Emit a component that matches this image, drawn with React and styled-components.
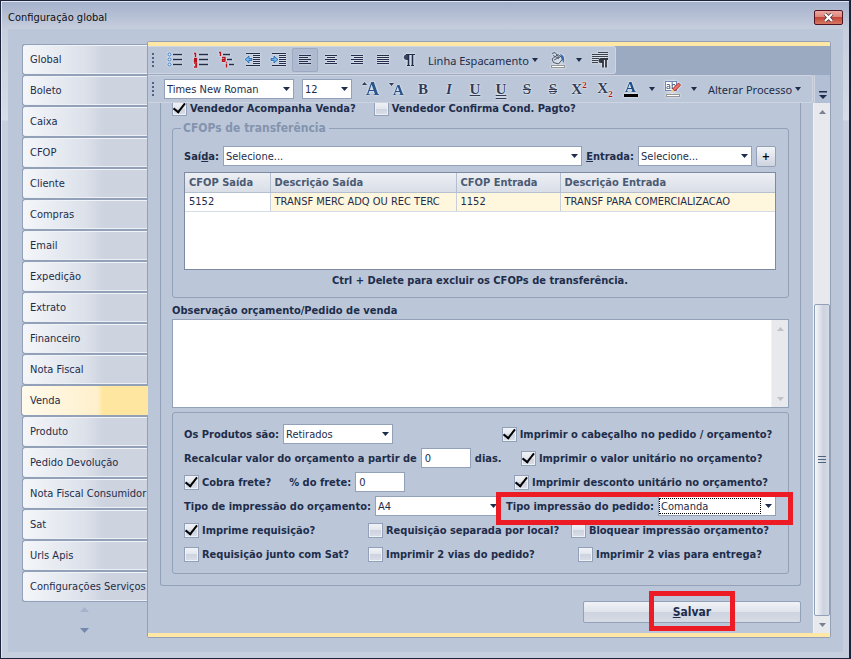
// Import Packages
import React, { useState } from 'react';
import styled, { createGlobalStyle, css } from 'styled-components';

const ui = `'DejaVu Sans Condensed', 'Noto Sans', sans-serif`;
const ribbon = `'Noto Sans', 'Open Sans', sans-serif`;
const serif = `'Liberation Serif', serif`;
const panel = 'rgb(187, 199, 216)';
const line = 'rgb(146, 160, 184)';
const ink = 'rgb(30, 45, 75)';
const yellow = 'rgb(255, 232, 166)';
const red = 'rgb(237, 28, 36)';
const barDark = 'rgb(155, 169, 193)';
const light = 'rgb(206, 213, 225)';

const GlobalStyle = createGlobalStyle`
  * { box-sizing: border-box; }
  body { margin: 0; }
  body, button, input, select, textarea {
    font-family: ${ui};
    font-size: 11px;
    color: ${ink};
  }
  button { cursor: pointer; }
`;

const Window = styled.main`
  display: flex;
  flex-direction: column;
  min-height: 100vh;
  padding: 1px 6px 6px 7px;
  border: 1px solid rgb(30, 35, 60);
  border-right-width: 2px;
  background: linear-gradient(rgb(163, 176, 203), rgb(198, 206, 221) 28px, rgb(214, 220, 232) 119px, rgb(199, 206, 221) 120px);
  box-shadow: inset 1px 1px 0 rgb(225, 230, 240);
`;
const TitleBar = styled.header`
  display: flex;
  align-items: center;
  justify-content: space-between;
  height: 27px;
  padding-top: 4px;
`;
const Title = styled.h1`
  margin: 0;
  font-size: 11px;
  font-weight: normal;
  color: rgb(15, 15, 20);
`;
const CloseButton = styled.button`
  display: flex;
  align-items: center;
  justify-content: center;
  width: 29px;
  height: 15px;
  padding: 0;
  border: 1px solid rgb(80, 20, 35);
  border-radius: 2px;
  background: linear-gradient(rgb(236, 170, 160), rgb(222, 130, 118) 50%, rgb(196, 70, 55) 50%, rgb(214, 120, 100));
`;
const Body = styled.div`
  flex: 1;
  display: flex;
  padding: 12px 12px 14px 14px;
  background: ${panel};
`;
const Tabs = styled.nav`
  width: 125px;
  flex-shrink: 0;
  padding-top: 3px;
  display: flex;
  flex-direction: column;
`;
const Tab = styled.button`
  height: 31px;
  padding: 0 0 0 7px;
  text-align: left;
  white-space: nowrap;
  border: 1px solid ${line};
  border-right: none;
  border-radius: 3px 0 0 3px;
  background: linear-gradient(90deg, rgb(244, 246, 249), rgb(220, 225, 234) 50%, rgb(205, 211, 223) 66%);
  box-shadow: inset 0 1px 0 rgb(240, 243, 248), inset 0 -1px 0 rgb(236, 239, 245);
  ${props => props.$active && css`
    margin: 0 -1px;
    padding-left: 8px;
    z-index: 1;
    background: linear-gradient(90deg, rgb(255, 250, 236), rgb(255, 240, 204) 60%, rgb(255, 230, 160) 64%);
    box-shadow: none;
  `}
`;
const TabScroll = styled.div`
  display: flex;
  flex-direction: column;
  align-items: center;
  gap: 16px;
  padding-top: 5px;
`;
const TabArrow = styled.button`
  display: flex;
  padding: 0;
  border: none;
  background: none;
`;
const Panel = styled.section`
  flex: 1;
  min-width: 0;
  display: flex;
  flex-direction: column;
  border: 1px solid ${line};
  border-radius: 2px;
  &::before, &::after {
    content: '';
    height: 4px;
    background: ${yellow};
  }
`;
const ToolRow = styled.div`
  display: flex;
  background: ${props => props.$dark ? barDark : panel};
  & + & { border-top: 1px solid ${barDark}; }
`;
const ToolBar = styled.div`
  display: flex;
  align-items: center;
  height: 28px;
  padding: 0 2px 0 4px;
  background: ${panel};
  border: 1px solid ${light};
  border-left: none;
  border-radius: 0 3px 3px 0;
  ${props => props.$grow && 'flex: 1;'}
`;
const Tools = styled.div`
  display: flex;
  align-items: center;
  padding-left: 6px;
`;
const FontFields = styled.div`
  display: flex;
  align-items: center;
  gap: 8px;
  padding: 0 6px 0 8px;
`;
const Tool = styled.button`
  display: flex;
  align-items: center;
  justify-content: center;
  width: 26px;
  height: 24px;
  padding: 0;
  border: 1px solid ${props => props.$active ? barDark : 'transparent'};
  border-radius: 2px;
  background: ${props => props.$active ? 'rgb(174, 186, 207)' : 'none'};
  flex-shrink: 0;
  svg { filter: drop-shadow(0 0 1px rgba(255, 255, 255, 0.9)); }
`;
const Letter = styled.span`
  font: bold 15px/18px ${serif};
  color: rgb(48, 60, 88);
  text-shadow: 0 0 2px white, 0 0 1px white;
  font-style: ${props => props.$italic ? 'italic' : 'normal'};
  text-decoration: ${props => props.$deco || 'none'};
  sup, sub {
    font-size: 9px;
    line-height: 1;
    color: rgb(178, 20, 30);
  }
`;
const TextTool = styled.button`
  display: flex;
  align-items: center;
  gap: 3px;
  padding: 0 7px 0 6px;
  border: none;
  background: none;
  font-family: ${ribbon};
  white-space: nowrap;
`;
const DropTool = styled.button`
  display: flex;
  justify-content: center;
  width: 16px;
  padding: 0;
  border: none;
  background: none;
`;
const Overflow = styled.button`
  display: flex;
  align-items: flex-end;
  justify-content: center;
  width: 16px;
  margin-left: 1px;
  padding: 0 0 4px;
  border: none;
  border-left: 1px solid ${light};
  background: rgb(178, 191, 212);
`;
const ScrollArea = styled.div`
  flex: 1;
  display: flex;
  min-height: 0;
`;
const Content = styled.form`
  flex: 1;
  min-width: 0;
  overflow: hidden;
  padding: 0 12px;
`;
const Outer = styled.div`
  margin-top: -4px;
  padding: 0 11px 7px;
  border: 1px solid ${line};
  border-top: none;
  border-radius: 0 0 3px 3px;
`;
const FieldRow = styled.div`
  display: flex;
  align-items: center;
  gap: 4px;
  height: 24px;
`;
const TopRow = styled(FieldRow)`
  gap: 18px;
  height: 18px;
  margin-bottom: 3px;
`;
const Label = styled.label`
  font-weight: bold;
  white-space: nowrap;
`;
const FreightLabel = styled(Label)`
  margin-left: 14px;
`;
const CheckLabel = styled(Label)`
  display: flex;
  align-items: center;
  gap: 3px;
`;
const CheckInput = styled.input`
  appearance: none;
  display: grid;
  place-items: center;
  width: 15px;
  height: 15px;
  margin: 0;
  border: 1px solid ${line};
  background: linear-gradient(rgb(240, 242, 246), rgb(226, 230, 237) 50%, rgb(205, 211, 223) 50%, rgb(218, 223, 232));
  box-shadow: inset 0 0 0 1px rgb(238, 241, 246);
  &:checked::before {
    content: '';
    width: 5px;
    height: 10px;
    border: solid black;
    border-width: 0 2px 2px 0;
    transform: rotate(38deg) translate(-1px, -1px);
  }
`;
const SelectBox = styled.span`
  display: flex;
  align-items: center;
  height: 20px;
  min-width: 0;
  padding: 1px 3px 1px 0;
  border: 1px solid ${line};
  background: white;
  ${props => props.$width ? `width: ${props.$width}px;` : 'flex: 1;'}
  svg { flex-shrink: 0; }
`;
const SelectInput = styled.select`
  appearance: none;
  flex: 1;
  min-width: 0;
  height: 16px;
  margin-right: 4px;
  padding: 0 1px;
  border: ${props => props.$focus ? '1px dotted black' : '1px solid transparent'};
  background: none;
`;
const NumberInput = styled.input`
  width: 50px;
  height: 20px;
  padding: 0 3px;
  border: 1px solid ${line};
  background: white;
`;
const Group = styled.fieldset`
  min-width: 0;
  margin: 0 0 4px;
  padding: ${props => props.$padding};
  border: 1px solid ${line};
  border-radius: 3px;
`;
const Legend = styled.legend`
  padding: 0 3px 0 2px;
  margin-left: -3px;
  font-size: 12px;
  line-height: 16px;
  font-weight: bold;
  color: rgb(132, 147, 174);
`;
const AddButton = styled.button`
  width: 20px;
  height: 21px;
  padding: 0;
  font-weight: bold;
  color: black;
  border: 1px solid ${line};
  border-radius: 2px;
  background: linear-gradient(rgb(243, 245, 248), rgb(205, 211, 223));
`;
const Grid = styled.div`
  height: 98px;
  margin-top: 4px;
  border: 1px solid rgb(125, 138, 162);
  background: white;
`;
const Table = styled.table`
  width: 100%;
  table-layout: fixed;
  border-collapse: collapse;
  th, td {
    height: 19px;
    padding: 0 4px;
    text-align: left;
    white-space: nowrap;
    border-right: 1px solid rgb(200, 207, 219);
    border-bottom: 1px solid rgb(214, 220, 230);
  }
  th {
    color: rgb(75, 90, 115);
    background: linear-gradient(rgb(236, 239, 243), rgb(217, 222, 231));
    border-color: rgb(180, 191, 208);
  }
  td { background: rgb(255, 246, 222); }
  td:first-child { background: white; }
  th:last-child, td:last-child { border-right: none; }
`;
const Hint = styled.p`
  margin: 3px 0 0;
  line-height: 16px;
  text-align: center;
  font-weight: bold;
`;
const NoteLabel = styled(Label)`
  display: block;
  line-height: 17px;
`;
const NoteBox = styled.div`
  display: flex;
  height: 89px;
  margin-bottom: 4px;
  border: 1px solid ${line};
  background: white;
`;
const Note = styled.textarea`
  flex: 1;
  resize: none;
  border: none;
  overflow: hidden;
  background: none;
`;
const SideCell = styled.div`
  display: flex;
  align-items: center;
  justify-content: center;
  gap: 4px;
  width: 272px;
  margin-left: auto;
  flex-shrink: 0;
  position: relative;
`;
const SideCheck = styled(SideCell)`
  justify-content: center;
  padding-right: 8px;
`;
const CheckGrid = styled.div`
  display: grid;
  grid-template-columns: 184px 1fr 214px;
  align-items: center;
  height: 24px;
  & > :last-child { justify-self: center; }
`;
const Footer = styled.div`
  display: flex;
  justify-content: flex-end;
  padding: 15px 0 10px;
`;
const SaveButton = styled.button`
  position: relative;
  width: 218px;
  height: 22px;
  font-size: 12px;
  font-weight: bold;
  border: 1px solid ${line};
  border-radius: 2px;
  background: linear-gradient(rgb(240, 242, 246), rgb(222, 227, 235) 50%, rgb(205, 211, 223) 50%, rgb(214, 219, 229));
`;
const Mark = styled.span`
  position: absolute;
  z-index: 2;
  inset: ${props => props.$inset};
  border: 5px solid ${red};
  pointer-events: none;
`;
const ScrollBar = styled.div`
  display: flex;
  flex-direction: column;
  align-items: center;
  width: 17px;
  background: rgb(231, 233, 237);
  border-left: 1px solid rgb(240, 242, 246);
`;
const ScrollButton = styled.button`
  display: flex;
  align-items: center;
  justify-content: center;
  width: 100%;
  height: 17px;
  padding: 0;
  border: none;
  background: none;
`;
const ScrollTrack = styled.div`
  flex: 1;
  align-self: stretch;
  display: flex;
  flex-direction: column;
  justify-content: flex-end;
`;
const Thumb = styled.div`
  height: 63%;
  display: flex;
  align-items: center;
  justify-content: center;
  border: 1px solid ${line};
  border-radius: 2px;
  background: linear-gradient(90deg, rgb(246, 248, 250), rgb(205, 211, 223) 60%, rgb(214, 220, 230));
`;

const Arrow = ({ up, color = ink, size = 7 }) => (
  <svg width={size} height={size > 7 ? 5 : 4} viewBox="0 0 8 4" preserveAspectRatio="none" fill={color} aria-hidden="true">
    <path d={up ? 'M0 4L4 0L8 4Z' : 'M0 0L4 4L8 0Z'} />
  </svg>
);
const Grip = () => (
  <svg width="4" height="16" fill="rgb(80, 98, 130)" aria-hidden="true">
    {[1, 5, 9, 13].map(y => <rect key={y} x="0" y={y} width="2" height="2" />)}
  </svg>
);
const Lines = ({ rows }) => rows.map(([x, y, w]) => <path key={y} d={`M${x} ${y + 0.5}h${w}`} />);
const Icon = ({ children }) => (
  <svg width="18" height="18" viewBox="0 0 18 18" fill="none" stroke="rgb(35, 45, 75)" aria-hidden="true">{children}</svg>
);
const alignRows = {
  left: [[3, 4, 12], [3, 6, 9], [3, 8, 12], [3, 10, 9], [3, 12, 12]],
  center: [[3, 4, 12], [5, 6, 8], [3, 8, 12], [5, 10, 8], [3, 12, 12]],
  right: [[3, 4, 12], [6, 6, 9], [3, 8, 12], [6, 10, 9], [3, 12, 12]],
  full: [[3, 4, 12], [3, 6, 12], [3, 8, 12], [3, 10, 12], [3, 12, 12]]
};
const indentRows = [[2, 2, 14], [9, 4, 7], [9, 6, 7], [9, 8, 7], [9, 10, 7], [9, 12, 7], [2, 14, 14]];

const Bullets = () => (
  <Icon>
    {[3.5, 8.5, 13.5].map(y => (
      <g key={y}>
        <circle cx="3.5" cy={y} r="1.5" stroke="rgb(60, 120, 195)" fill="rgb(225, 238, 250)" />
        <path d={`M7 ${y}h9`} strokeWidth="1.4" />
      </g>
    ))}
  </Icon>
);
const Numbers = () => (
  <Icon>
    <g stroke="rgb(185, 20, 30)" strokeWidth="1.4">
      <path d="M2 2.5h1.500V6" />
      <path d="M2 7.5h2.500v1.500h-2v1.500h2.500" />
      <path d="M2 12h2.500v4h-2.500M3 14h1.500" />
    </g>
    <path d="M7 3.500h9M7 8.500h9M7 13.500h9" strokeWidth="1.4" />
  </Icon>
);
const MultiLevel = () => (
  <Icon>
    <g stroke="rgb(185, 20, 30)" strokeWidth="1.4">
      <path d="M1 1.500h1.500V5" />
      <path d="M4 6.500h3v4M7 8.500h-2.500v1.800h2.500" />
      <path d="M8.500 12.500v4M8.500 10.800v1" />
    </g>
    <path d="M5 3.500h7M9 8.500h5M11 13.500h5" strokeWidth="1.4" />
  </Icon>
);
const Indent = ({ right }) => (
  <Icon>
    <Lines rows={indentRows} />
    <path
      d={right ? 'M1 7.500h3V5L8 8.500L4 12V9.500H1Z' : 'M8 7.500H5V5L1 8.500L5 12V9.500H8Z'}
      fill="rgb(110, 180, 235)" stroke="rgb(30, 90, 165)" strokeWidth="0.8"
    />
  </Icon>
);
const Align = ({ type }) => <Icon><Lines rows={alignRows[type]} /></Icon>;
const Pilcrow = () => (
  <Icon>
    <path d="M8 3.500H6a2.800 2.800 0 0 0 0 5.500h2Z" fill="rgb(60, 70, 100)" stroke="none" />
    <path d="M8.500 3v11M12.500 3v11" strokeWidth="1.6" />
    <path d="M6 3.500h9M7 14.500h3M11 14.500h3" />
  </Icon>
);
const Bucket = () => (
  <Icon>
    <path d="M3 8l6-4.500l5 4l-4.500 5.500l-5-1.500Z" fill="rgb(215, 221, 231)" stroke="rgb(70, 80, 100)" />
    <path d="M5 9l6-3M3 2.500l3-1l4 5M4 4.500l6 3" stroke="rgb(80, 90, 110)" />
    <path d="M11 3c4 1 5 4 3.500 9l-2-4Z" fill="rgb(60, 110, 175)" stroke="none" />
    <rect x="2.5" y="14.5" width="13" height="2" fill="white" stroke="rgb(150, 150, 150)" />
  </Icon>
);
const ParagraphIcon = () => (
  <Icon>
    <path d="M7 1.500h10M1 3.500h16M1 5.500h16M1 7.500h7M1 9.500h6M1 11.500h6" stroke="rgb(60, 65, 75)" />
    <path d="M12 7h-2a2.500 2.500 0 0 0 0 5h2Z" fill="rgb(50, 55, 65)" stroke="none" />
    <path d="M12 7.500v9M15 7.500v9M10 8h7" stroke="rgb(50, 55, 65)" strokeWidth="1.8" />
  </Icon>
);
const FontSize = ({ up }) => (
  <svg width="18" height="18" viewBox="0 0 18 18" fill="rgb(40, 85, 140)" aria-hidden="true">
    <path d={up ? 'M0 5l2.500-3l2.500 3Z' : 'M1 3l2.500 3l2.500-3Z'} fill="rgb(48, 60, 88)" />
    <text x={up ? 4 : 5} y="15" fontFamily="Liberation Serif" fontWeight="bold" fontSize={up ? 18 : 15}>A</text>
  </svg>
);
const FontColor = () => (
  <svg width="18" height="18" viewBox="0 0 18 18" fill="rgb(30, 80, 135)" aria-hidden="true">
    <text x="3" y="12" fontFamily="Liberation Serif" fontWeight="bold" fontSize="15">A</text>
    <rect x="2" y="14" width="14" height="3" fill="black" />
  </svg>
);
const Highlight = () => (
  <Icon>
    <rect x="1.5" y="1.5" width="11" height="9" fill="white" stroke="rgb(110, 135, 185)" />
    <text x="2" y="9" fontFamily="DejaVu Sans Condensed" fontSize="9" fill="rgb(40, 60, 100)" stroke="none">ab</text>
    <path d="M14.5 3l2 2l-5.500 6l-2.500-2Z" fill="rgb(235, 115, 105)" stroke="rgb(175, 55, 50)" />
    <path d="M8 9l3 2.500l-5 1.500Z" fill="rgb(240, 205, 160)" stroke="none" />
    <rect x="2.5" y="14.5" width="13" height="2" fill="white" stroke="rgb(150, 150, 150)" />
  </Icon>
);

const tabs = [
  'Global', 'Boleto', 'Caixa', 'CFOP', 'Cliente', 'Compras', 'Email', 'Expedição', 'Extrato', 'Financeiro',
  'Nota Fiscal', 'Venda', 'Produto', 'Pedido Devolução', 'Nota Fiscal Consumidor', 'Sat', 'Urls Apis',
  'Configurações Serviços'
];
const paragraphTools = [
  ['Marcadores', <Bullets />], ['Numeração', <Numbers />], ['Vários níveis', <MultiLevel />],
  ['Diminuir recuo', <Indent />], ['Aumentar recuo', <Indent right />], ['Esquerda', <Align type="left" />],
  ['Centro', <Align type="center" />], ['Direita', <Align type="right" />], ['Justificar', <Align type="full" />],
  ['Marcas', <Pilcrow />]
];
const fontTools = [
  ['Aumentar', <FontSize up />],
  ['Diminuir', <FontSize />],
  ['Negrito', <Letter>B</Letter>],
  ['Itálico', <Letter $italic>I</Letter>],
  ['Sublinhado', <Letter $deco="underline">U</Letter>],
  ['Sublinhado duplo', <Letter $deco="underline double">U</Letter>],
  ['Tachado', <Letter $deco="line-through">S</Letter>],
  ['Tachado duplo', <Letter $deco="line-through double">S</Letter>],
  ['Sobrescrito', <Letter>X<sup>2</sup></Letter>],
  ['Subscrito', <Letter>X<sub>2</sub></Letter>],
  ['Cor da fonte', <FontColor />]
];

const Select = ({ id, value, width, focus, label }) => (
  <SelectBox $width={width}>
    <SelectInput id={id} aria-label={label} $focus={focus} defaultValue={value}>
      <option>{value}</option>
    </SelectInput>
    <Arrow />
  </SelectBox>
);
const Check = ({ text, on }) => (
  <CheckLabel>
    <CheckInput type="checkbox" defaultChecked={on} />
    {text}
  </CheckLabel>
);

const App = () => {
  const [current, setCurrent] = useState('Venda');

  return (
    <Window>
      <GlobalStyle />
      <TitleBar>
        <Title>Configuração global</Title>
        <CloseButton aria-label="Fechar">
          <svg width="11" height="9" viewBox="0 0 11 9" aria-hidden="true">
            <path d="M2 1l7 7M9 1l-7 7" stroke="rgb(70, 50, 60)" strokeWidth="3.6" />
            <path d="M2 1l7 7M9 1l-7 7" stroke="white" strokeWidth="2.2" />
          </svg>
        </CloseButton>
      </TitleBar>
      <Body>
        <Tabs>
          {tabs.map(name =>
            <Tab key={name} $active={name === current} onClick={() => setCurrent(name)}>{name}</Tab>
          )}
          <TabScroll>
            <TabArrow aria-label="Acima"><Arrow up size={9} color="rgb(165, 178, 203)" /></TabArrow>
            <TabArrow aria-label="Abaixo"><Arrow size={9} color="rgb(115, 136, 173)" /></TabArrow>
          </TabScroll>
        </Tabs>
        <Panel>
          <ToolRow $dark>
            <ToolBar>
              <Grip />
              <Tools>
                {paragraphTools.map(([name, icon]) =>
                  <Tool key={name} aria-label={name} $active={name === 'Esquerda'}>{icon}</Tool>
                )}
                <TextTool>Linha Espacamento <Arrow size={6} /></TextTool>
                <Tool aria-label="Preenchimento"><Bucket /></Tool>
                <DropTool aria-label="Cores de preenchimento"><Arrow size={6} /></DropTool>
                <Tool aria-label="Parágrafo"><ParagraphIcon /></Tool>
              </Tools>
            </ToolBar>
          </ToolRow>
          <ToolRow>
            <ToolBar $grow>
              <Grip />
              <FontFields>
                <Select label="Fonte" value="Times New Roman" width={130} />
                <Select label="Tamanho" value="12" width={50} />
              </FontFields>
              {fontTools.map(([name, icon]) => <Tool key={name} aria-label={name}>{icon}</Tool>)}
              <DropTool aria-label="Cores da fonte"><Arrow size={6} /></DropTool>
              <Tool aria-label="Realce"><Highlight /></Tool>
              <DropTool aria-label="Cores de realce"><Arrow size={6} /></DropTool>
              <TextTool>Alterar Processo <Arrow size={6} /></TextTool>
            </ToolBar>
            <Overflow aria-label="Mais opções">
              <svg width="8" height="8" fill={ink} aria-hidden="true"><path d="M0 0h8v1.5H0ZM0 4h8L4 8Z" /></svg>
            </Overflow>
          </ToolRow>
          <ScrollArea>
            <Content onSubmit={e => e.preventDefault()}>
              <Outer>
                <TopRow>
                  <Check text="Vendedor Acompanha Venda?" on />
                  <Check text="Vendedor Confirma Cond. Pagto?" />
                </TopRow>
                <Group $padding="8px 12px 8px 11px">
                  <Legend>CFOPs de transferência</Legend>
                  <FieldRow>
                    <Label htmlFor="saida">Saí<u>d</u>a:</Label>
                    <Select id="saida" value="Selecione..." />
                    <Label htmlFor="entrada"><u>E</u>ntrada:</Label>
                    <Select id="entrada" value="Selecione..." width={114} />
                    <AddButton type="button" aria-label="Adicionar">+</AddButton>
                  </FieldRow>
                  <Grid>
                    <Table>
                      <colgroup>
                        <col width="85" /><col width="186" /><col width="104" /><col />
                      </colgroup>
                      <thead>
                        <tr><th>CFOP Saída</th><th>Descrição Saída</th><th>CFOP Entrada</th><th>Descrição Entrada</th></tr>
                      </thead>
                      <tbody>
                        <tr><td>5152</td><td>TRANSF MERC ADQ OU REC TERC</td><td>1152</td><td>TRANSF PARA COMERCIALIZACAO</td></tr>
                      </tbody>
                    </Table>
                  </Grid>
                  <Hint>Ctrl + Delete para excluir os CFOPs de transferência.</Hint>
                </Group>
                <NoteLabel htmlFor="note">Observação orçamento/Pedido de venda</NoteLabel>
                <NoteBox>
                  <Note id="note" />
                  <ScrollBar>
                    <ScrollButton type="button" aria-label="Subir"><Arrow up color="rgb(190, 193, 198)" /></ScrollButton>
                    <ScrollTrack />
                    <ScrollButton type="button" aria-label="Descer"><Arrow color="rgb(190, 193, 198)" /></ScrollButton>
                  </ScrollBar>
                </NoteBox>
                <Group $padding="9px 11px 7px">
                  <FieldRow>
                    <Label htmlFor="produtos">Os Produtos são:</Label>
                    <Select id="produtos" value="Retirados" width={110} />
                    <SideCheck><Check text="Imprimir o cabeçalho no pedido / orçamento?" on /></SideCheck>
                  </FieldRow>
                  <FieldRow>
                    <Label htmlFor="dias">Recalcular valor do orçamento a partir de</Label>
                    <NumberInput id="dias" defaultValue="0" />
                    <Label htmlFor="dias">dias.</Label>
                    <SideCell><Check text="Imprimir o valor unitário no orçamento?" on /></SideCell>
                  </FieldRow>
                  <FieldRow>
                    <Check text="Cobra frete?" on />
                    <FreightLabel htmlFor="frete">% do frete:</FreightLabel>
                    <NumberInput id="frete" defaultValue="0" />
                    <SideCell><Check text="Imprimir desconto unitário no orçamento?" on /></SideCell>
                  </FieldRow>
                  <FieldRow>
                    <Label htmlFor="tipo">Tipo de impressão do orçamento:</Label>
                    <Select id="tipo" value="A4" />
                    <SideCell>
                      <Label htmlFor="pedido">Tipo impressão do pedido:</Label>
                      <Select id="pedido" value="Comanda" width={118} focus />
                      <Mark $inset="-4px -16px -9px -9px" />
                    </SideCell>
                  </FieldRow>
                  <CheckGrid>
                    <Check text="Imprime requisição?" on />
                    <Check text="Requisição separada por local?" />
                    <Check text="Bloquear impressão orçamento?" />
                  </CheckGrid>
                  <CheckGrid>
                    <Check text="Requisição junto com Sat?" />
                    <Check text="Imprimir 2 vias do pedido?" />
                    <Check text="Imprimir 2 vias para entrega?" />
                  </CheckGrid>
                </Group>
              </Outer>
              <Footer>
                <SaveButton>
                  <u>S</u>alvar
                  <Mark $inset="-11px 65px -9px 65px" />
                </SaveButton>
              </Footer>
            </Content>
            <ScrollBar>
              <ScrollButton type="button" aria-label="Rolar para cima"><Arrow up color="rgb(120, 128, 145)" /></ScrollButton>
              <ScrollTrack>
                <Thumb>
                  <svg width="8" height="8" stroke="rgb(80, 98, 130)" aria-hidden="true">
                    <path d="M0 .5h8M0 3.5h8M0 6.5h8" />
                  </svg>
                </Thumb>
              </ScrollTrack>
              <ScrollButton type="button" aria-label="Rolar para baixo"><Arrow color="rgb(120, 128, 145)" /></ScrollButton>
            </ScrollBar>
          </ScrollArea>
        </Panel>
      </Body>
    </Window>
  );
};

export default App;
